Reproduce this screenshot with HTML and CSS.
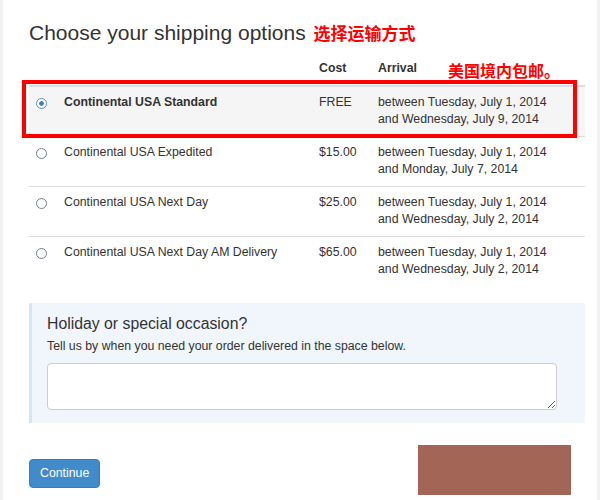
FILE: index.html
```html
<!DOCTYPE html>
<html lang="en">
<head>
  <meta charset="UTF-8">
  <meta name="viewport" content="width=device-width, initial-scale=1">
  <title>Choose your shipping options</title>
  <link rel="stylesheet" href="styles.css">
</head>
<body>
  <div class="page">
    <div class="content">
      <h1 class="title">Choose your shipping options <span class="note">选择运输方式</span></h1>

      <div class="options">
        <div class="row head">
          <span></span>
          <span></span>
          <span>Cost</span>
          <span>Arrival</span>
        </div>
        <label class="row option selected">
          <input type="radio" name="ship" checked>
          <span class="name">Continental USA Standard</span>
          <span>FREE</span>
          <span>between Tuesday, July 1, 2014<br>and Wednesday, July 9, 2014</span>
        </label>
        <label class="row option">
          <input type="radio" name="ship">
          <span class="name">Continental USA Expedited</span>
          <span>$15.00</span>
          <span>between Tuesday, July 1, 2014<br>and Monday, July 7, 2014</span>
        </label>
        <label class="row option">
          <input type="radio" name="ship">
          <span class="name">Continental USA Next Day</span>
          <span>$25.00</span>
          <span>between Tuesday, July 1, 2014<br>and Wednesday, July 2, 2014</span>
        </label>
        <label class="row option">
          <input type="radio" name="ship">
          <span class="name">Continental USA Next Day AM Delivery</span>
          <span>$65.00</span>
          <span>between Tuesday, July 1, 2014<br>and Wednesday, July 2, 2014</span>
        </label>
      </div>

      <div class="occasion">
        <h3>Holiday or special occasion?</h3>
        <p>Tell us by when you need your order delivered in the space below.</p>
        <textarea></textarea>
      </div>

      <div class="actions">
        <button type="button">Continue</button>
      </div>
    </div>

    <!-- annotations laid over the page -->
    <span class="note note-free">美国境内包邮。</span>
    <div class="mark"></div>
    <div class="redact"></div>
  </div>
</body>
</html>
```

FILE: styles.css
```css
body { margin: 0; background: #f2f2f2; font-family: "Liberation Sans", Arial, sans-serif; color: #333; }
.page { position: relative; display: flow-root; margin: 0 3px; min-height: 500px; background: #fff; }
.content { padding: 0 0 0 26px; width: 556px; }

.title { margin: 21px 0 8px; font-size: 21px; line-height: 24px; font-weight: normal; color: #333; }
.title .note { font-size: 17px; margin-left: 2px; }
.note { color: #f00; font-family: "Noto Sans CJK SC", sans-serif; font-size: 16px; font-weight: bold; }

.options { font-size: 12.3px; line-height: 17.5px; }
.row { display: grid; grid-template-columns: 28px 255px 59px 1fr; padding: 7px 0 7px 7px; }
.head { font-weight: bold; border-bottom: 2px solid #ddd; }
.option { border-top: 1px solid #ddd; }
.head + .option { border-top: 0; }
.selected { background: #f5f5f5; }
.selected .name { font-weight: bold; }

.option input { appearance: none; margin: 4px 0 0; width: 11px; height: 11px; border: 1px solid #6f8196; border-radius: 50%; background: #fff; }
.option input:checked { border-color: #5b93c9; background: radial-gradient(circle, #3d7fc1 0 2px, #fff 2.5px); }

.occasion { margin-top: 17px; padding: 11px 0 13px 15px; background: #f0f6fc; border-left: 3px solid #d4e5f4; }
.occasion h3 { margin: 0; font-size: 15.8px; line-height: 20px; font-weight: normal; }
.occasion p { margin: 4px 0 0; font-size: 12.3px; line-height: 17px; }
.occasion textarea { display: block; margin-top: 8px; width: 510px; height: 47px; box-sizing: border-box; border: 1px solid #ccc; border-radius: 4px; background: #fff; resize: vertical; }

.actions { margin-top: 36px; }
.actions button { font-family: inherit; font-size: 12.3px; line-height: 17px; padding: 5px 10px; color: #fff; background: #428bca; border: 1px solid #357ebd; border-radius: 4px; cursor: pointer; }

.note-free { position: absolute; left: 445px; top: 58px; }
.mark { position: absolute; left: 19px; top: 80px; width: 555px; height: 58px; box-sizing: border-box; border: 4px solid #f00; }
.redact { position: absolute; left: 415px; top: 445px; width: 153px; height: 50px; background: #a36555; }
```
